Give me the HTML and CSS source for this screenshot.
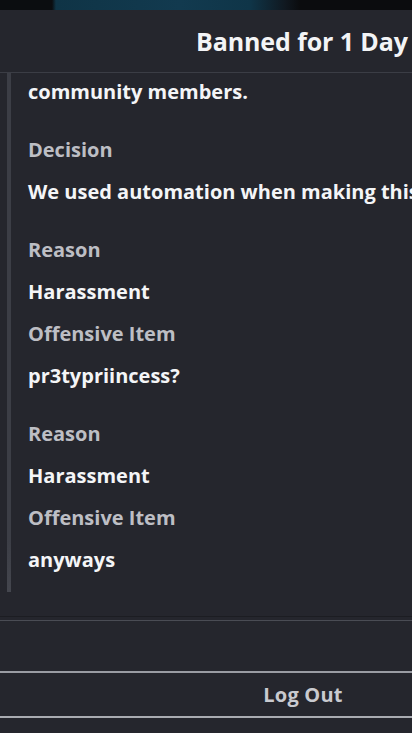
FILE: index.html
```html
<!DOCTYPE html>
<html>
<head>
<meta charset="utf-8">
<link rel="stylesheet" href="styles.css">
</head>
<body>
<div class="backdrop"></div>
<div class="modal">
  <div class="header"><h1 class="title">Banned for 1 Day</h1></div>
  <div class="body">
    <div class="scrollbar"></div>
    <div class="content">
      <p class="value first">community members.</p>
      <div class="group">
        <p class="label">Decision</p>
        <p class="value">We used automation when making this decision.</p>
      </div>
      <div class="group">
        <p class="label">Reason</p>
        <p class="value">Harassment</p>
        <p class="label">Offensive Item</p>
        <p class="value">pr3typriincess?</p>
      </div>
      <div class="group">
        <p class="label">Reason</p>
        <p class="value">Harassment</p>
        <p class="label">Offensive Item</p>
        <p class="value">anyways</p>
      </div>
    </div>
  </div>
  <div class="spacer"></div>
  <div class="footer"><button class="logout">Log Out</button></div>
</div>
</body>
</html>
```
FILE: styles.css
```css
* { box-sizing: border-box; }
html, body { margin: 0; padding: 0; }
body {
  width: 412px;
  height: 733px;
  overflow: hidden;
  background: #25262d;
  font-family: "Open Sans", "Noto Sans", sans-serif;
  color: #f1f2f4;
}
.backdrop {
  height: 10px;
  background: linear-gradient(90deg, #0b0d10 0, #0b0d10 52px, #0f3446 56px, #123a4f 180px, #0f3548 250px, #101820 285px, #0b0c0e 300px, #0b0c0e 100%);
}
.modal {
  display: flex;
  flex-direction: column;
  background: #25262d;
}
.header {
  height: 63px;
  border-bottom: 1px solid #3b3d45;
  padding-left: 196px;
  display: flex;
  align-items: center;
  overflow: hidden;
}
.title {
  margin: 0;
  font-size: 25px;
  font-weight: 700;
  white-space: nowrap;
  color: #f3f4f6;
  letter-spacing: -0.1px;
}
.body {
  display: flex;
  height: 519px;
}
.scrollbar {
  width: 4px;
  margin-left: 7px;
  background: linear-gradient(180deg, #3c3e46 0, #3c3e46 90%, #44464e 100%);
}
.content {
  flex: 1;
  padding-left: 17px;
  overflow: hidden;
  min-width: 0;
}
p { margin: 0; white-space: nowrap; }
.value {
  font-size: 20px;
  font-weight: 700;
  line-height: 42px;
  color: #f4f5f7;
}
.first { margin-top: -2px; }
.label {
  font-size: 20px;
  font-weight: 700;
  line-height: 42px;
  color: #bdbec4;
}
.group { margin-top: 16px; }
.spacer {
  margin-top: 24px;
  height: 5px;
  border-top: 1px solid #1c1d22;
  border-bottom: 1px solid #4a4c54;
}
.footer {
  margin-top: 50px;
  border-top: 2px solid #9a9ca3;
  border-bottom: 2px solid #a9abb1;
  height: 47px;
  display: flex;
  justify-content: center;
  padding-left: 194px;
  align-items: center;
}
.logout {
  background: none;
  border: none;
  font-family: inherit;
  font-size: 20px;
  font-weight: 700;
  color: #c9cacf;
  padding: 0;
  letter-spacing: 0.2px;
}
```
